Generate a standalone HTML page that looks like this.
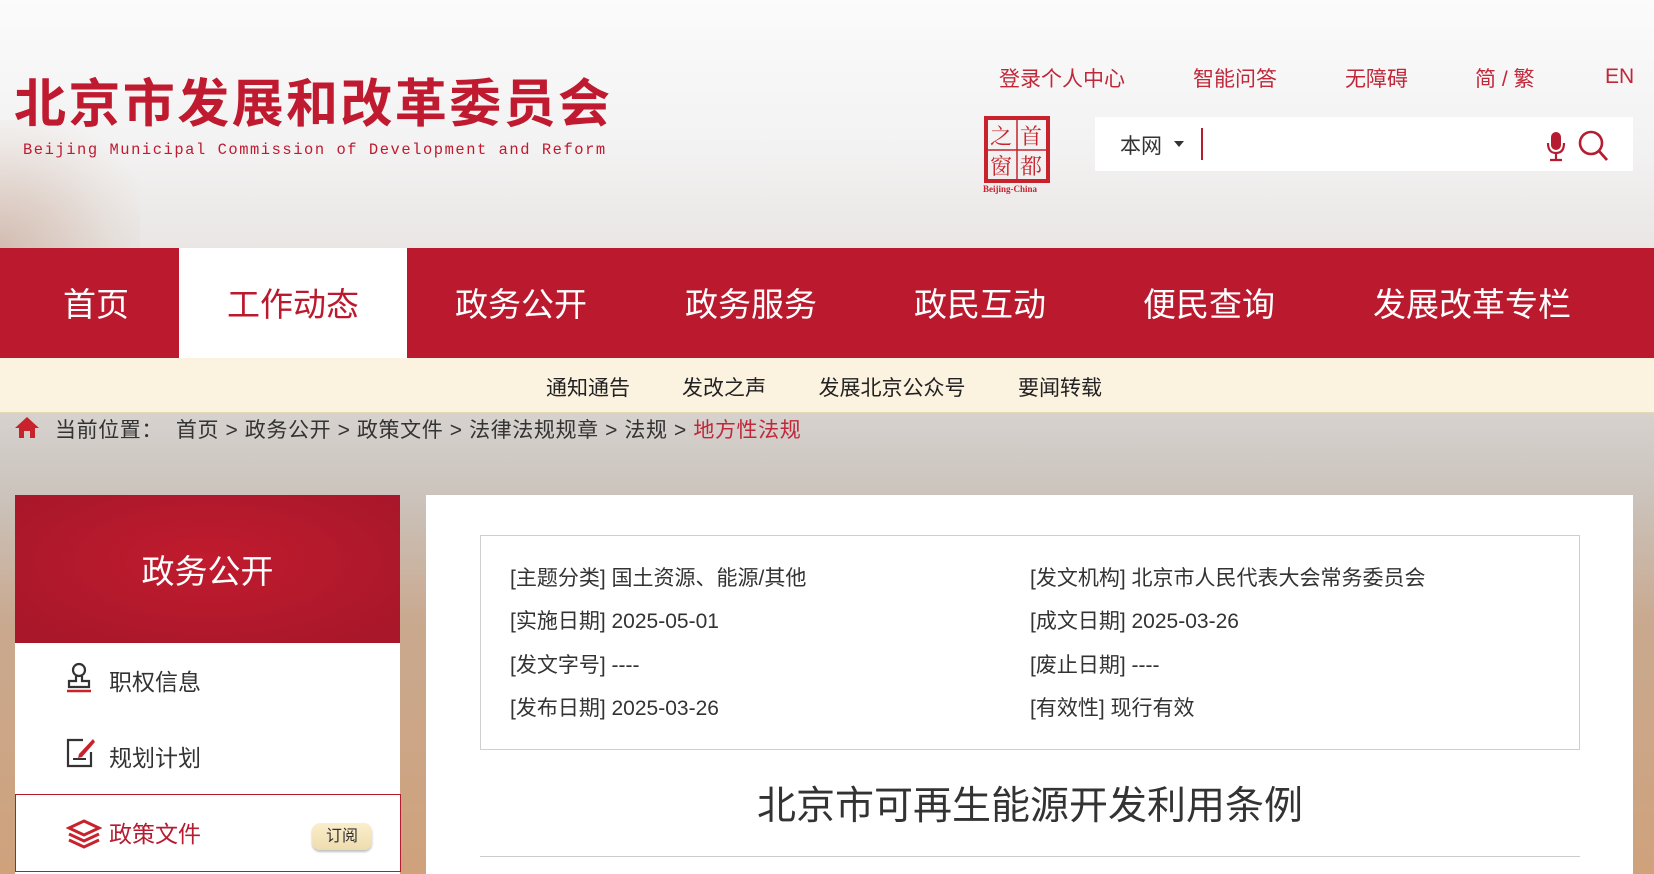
<!DOCTYPE html>
<html><head><meta charset="utf-8">
<style>
*{margin:0;padding:0;box-sizing:border-box}
body{width:1654px;height:874px;overflow:hidden;position:relative;font-family:"Liberation Sans","Noto Sans CJK SC",sans-serif;background:#f4f3f2}
.abs{position:absolute}
.hdr{left:0;top:0;width:1654px;height:248px;background:linear-gradient(180deg,#fbfbfb 0%,#f3f2f2 60%,#e9e6e4 100%)}
.hdrl{left:0;top:120px;width:140px;height:128px;background:radial-gradient(ellipse at 0% 100%,rgba(170,110,80,.35),rgba(200,170,150,.12) 60%,transparent 80%)}
.title{left:14px;top:62px;font-size:52px;font-weight:bold;color:#bf1a2f;letter-spacing:2.4px;white-space:nowrap}
.sub{left:23px;top:141px;font-family:"Liberation Mono",monospace;font-size:16px;color:#bf1a2f;letter-spacing:1.6px;white-space:nowrap;transform:scaleX(0.965);transform-origin:0 0}
.tl{top:63px;font-size:21px;color:#c0283a;white-space:nowrap}
.search{left:1095px;top:117px;width:538px;height:54px;background:#fff}
.nav{left:0;top:248px;width:1654px;height:110px;background:#bb1a2e}
.nav span{position:absolute;top:30px;font-size:33px;color:#fff;transform:translateX(-50%);white-space:nowrap}
.act{left:179px;top:248px;width:228px;height:110px;background:#fff}
.subnav{left:0;top:358px;width:1654px;height:55px;background:#fcf2e0;border-bottom:1px solid #e8d7b6}
.subnav span{position:absolute;top:14px;font-size:21px;color:#222;transform:translateX(-50%);white-space:nowrap}
.scene{left:0;top:413px;width:1654px;height:461px;background:linear-gradient(180deg,#d6d2ce 0%,#cbc3bc 18%,#c9a98f 45%,#cfa27c 100%)}
.bc{left:55px;top:414px;font-size:21px;color:#333;white-space:nowrap;letter-spacing:0.6px}
.side{left:15px;top:495px;width:385px;height:379px;background:#fff}
.sh{left:15px;top:495px;width:385px;height:148px;background:radial-gradient(ellipse at 50% 45%,#c11b2e,#a8172a 90%);color:#fff;font-size:33px;text-align:center;line-height:154px}
.si{font-size:23px;color:#333;white-space:nowrap}
.panel{left:426px;top:495px;width:1207px;height:379px;background:#fff}
.info{left:480px;top:535px;width:1100px;height:215px;border:1px solid #cfcfcf}
.r{font-size:21px;color:#333;white-space:nowrap}
</style></head><body>
<div class="abs hdr"></div>
<div class="abs hdrl"></div>
<div class="abs title">北京市发展和改革委员会</div>
<div class="abs sub">Beijing Municipal Commission of Development and Reform</div>
<div class="abs tl" style="left:999px">登录个人中心</div>
<div class="abs tl" style="left:1193px">智能问答</div>
<div class="abs tl" style="left:1345px">无障碍</div>
<div class="abs tl" style="left:1475px">简 / 繁</div>
<div class="abs tl" style="left:1605px;top:65px">EN</div>
<svg class="abs" style="left:983px;top:116px" width="72" height="80" viewBox="0 0 72 80">
<rect x="3" y="2" width="62" height="63" fill="none" stroke="#c8232d" stroke-width="4"/>
<line x1="34" y1="4" x2="34" y2="64" stroke="#c8232d" stroke-width="1.5"/>
<line x1="5" y1="34" x2="63" y2="34" stroke="#c8232d" stroke-width="1.5"/>
<text x="7" y="28" font-size="22" fill="#c8232d" font-family="Noto Serif CJK SC,serif">之</text>
<text x="37" y="28" font-size="22" fill="#c8232d" font-family="Noto Serif CJK SC,serif">首</text>
<text x="7" y="58" font-size="22" fill="#c8232d" font-family="Noto Serif CJK SC,serif">窗</text>
<text x="37" y="58" font-size="22" fill="#c8232d" font-family="Noto Serif CJK SC,serif">都</text>
<text x="0" y="76" font-size="9" font-weight="bold" fill="#c8232d" font-family="Liberation Serif,serif">Beijing-China</text>
</svg>
<div class="abs search"></div>
<div class="abs" style="left:1120px;top:130px;font-size:21px;color:#333">本网</div>
<div class="abs" style="left:1174px;top:141px;width:0;height:0;border-left:5px solid transparent;border-right:5px solid transparent;border-top:6px solid #333"></div>
<div class="abs" style="left:1201px;top:128px;width:2px;height:32px;background:#b51c30"></div>
<svg class="abs" style="left:1545px;top:128px" width="80" height="36" viewBox="0 0 80 36">
<rect x="6" y="4" width="10" height="18" rx="5" fill="#b51c30"/>
<path d="M3 15 q0 10 8 10 q8 0 8-10 M11 25 v6 M5 32 h12" stroke="#b51c30" stroke-width="2.2" fill="none"/>
<circle cx="46" cy="15" r="11" stroke="#b51c30" stroke-width="2.6" fill="none"/>
<line x1="54" y1="23" x2="62" y2="32" stroke="#b51c30" stroke-width="2.8"/>
</svg>
<div class="abs nav">
<span style="left:96px">首页</span>
<span style="left:521px">政务公开</span>
<span style="left:751px">政务服务</span>
<span style="left:980px">政民互动</span>
<span style="left:1209px">便民查询</span>
<span style="left:1472px">发展改革专栏</span>
</div>
<div class="abs act"></div>
<div class="abs" style="left:293px;top:278px;font-size:33px;color:#bb1a2e;transform:translateX(-50%);white-space:nowrap">工作动态</div>
<div class="abs subnav">
<span style="left:588px">通知通告</span>
<span style="left:724px">发改之声</span>
<span style="left:892px">发展北京公众号</span>
<span style="left:1060px">要闻转载</span>
</div>
<div class="abs scene"></div>
<svg class="abs" style="left:14px;top:415px" width="26" height="24" viewBox="0 0 26 24"><path d="M13 2 L25 13 H21 V23 H16 V16 H10 V23 H5 V13 H1 Z" fill="#c8232d"/></svg>
<div class="abs bc">当前位置：&nbsp; 首页 &gt; 政务公开 &gt; 政策文件 &gt; 法律法规规章 &gt; 法规 &gt; <span style="color:#c0283a">地方性法规</span></div>
<div class="abs side"></div>
<div class="abs sh">政务公开</div>
<svg class="abs" style="left:66px;top:662px" width="26" height="32" viewBox="0 0 26 32"><circle cx="13" cy="8" r="6" fill="none" stroke="#333" stroke-width="2.2"/><path d="M10 14 v5 H3 v6 h20 v-6 h-7 v-5" fill="none" stroke="#333" stroke-width="2.2"/><line x1="1" y1="29" x2="25" y2="29" stroke="#c8232d" stroke-width="2.5"/></svg>
<div class="abs si" style="left:109px;top:663px">职权信息</div>
<svg class="abs" style="left:66px;top:737px" width="30" height="32" viewBox="0 0 30 32"><path d="M17 3 H2 V29 H25 V15" fill="none" stroke="#333" stroke-width="2.2"/><path d="M27 2 L13 17 L12 21 L16 20 L29 5 Z" fill="#c8232d"/><line x1="7" y1="22" x2="20" y2="22" stroke="#333" stroke-width="2"/></svg>
<div class="abs si" style="left:109px;top:739px">规划计划</div>
<div class="abs" style="left:15px;top:794px;width:386px;height:78px;border:1px solid #b51c30;background:#fff"></div>
<svg class="abs" style="left:66px;top:819px" width="36" height="30" viewBox="0 0 36 30"><path d="M18 2 L33 9 L18 16 L3 9 Z" fill="none" stroke="#c8232d" stroke-width="3"/><path d="M3 15 L18 22 L33 15 M3 21 L18 28 L33 21" fill="none" stroke="#c8232d" stroke-width="3"/></svg>
<div class="abs si" style="left:109px;top:815px;color:#b51c30">政策文件</div>
<div class="abs" style="left:312px;top:823px;width:60px;height:27px;border-radius:8px;background:linear-gradient(#fbeecb,#eedcae);box-shadow:0 2px 2px rgba(0,0,0,.25);font-size:16px;color:#333;text-align:center;line-height:27px">订阅</div>
<div class="abs panel"></div>
<div class="abs info"></div>
<div class="abs r" style="left:510px;top:562px">[主题分类] 国土资源、能源/其他</div>
<div class="abs r" style="left:1030px;top:562px">[发文机构] 北京市人民代表大会常务委员会</div>
<div class="abs r" style="left:510px;top:605px">[实施日期] 2025-05-01</div>
<div class="abs r" style="left:1030px;top:605px">[成文日期] 2025-03-26</div>
<div class="abs r" style="left:510px;top:649px">[发文字号] ----</div>
<div class="abs r" style="left:1030px;top:649px">[废止日期] ----</div>
<div class="abs r" style="left:510px;top:692px">[发布日期] 2025-03-26</div>
<div class="abs r" style="left:1030px;top:692px">[有效性] 现行有效</div>
<div class="abs" style="left:480px;top:775px;width:1100px;text-align:center;font-size:39px;color:#333">北京市可再生能源开发利用条例</div>
<div class="abs" style="left:480px;top:856px;width:1100px;height:1px;background:#ccc"></div>
</body></html>
